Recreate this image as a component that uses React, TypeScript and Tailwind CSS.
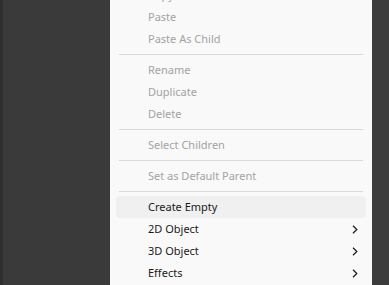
import React from "react";

type Item = { label: string; disabled?: boolean; sub?: boolean; active?: boolean } | "sep";

const items: Item[] = [
  { label: "Copy", disabled: true },
  { label: "Paste", disabled: true },
  { label: "Paste As Child", disabled: true },
  "sep",
  { label: "Rename", disabled: true },
  { label: "Duplicate", disabled: true },
  { label: "Delete", disabled: true },
  "sep",
  { label: "Select Children", disabled: true },
  "sep",
  { label: "Set as Default Parent", disabled: true },
  "sep",
  { label: "Create Empty", active: true },
  { label: "2D Object", sub: true },
  { label: "3D Object", sub: true },
  { label: "Effects", sub: true },
];

function Chevron() {
  return (
    <svg width="6" height="9" viewBox="0 0 6 9" fill="none">
      <path d="M1 0.8 L4.8 4.5 L1 8.2" stroke="#1a1a1a" strokeWidth="1.2" />
    </svg>
  );
}

export default function App() {
  return (
    <div
      className="w-[389px] h-[285px] overflow-hidden flex bg-[#3a3a3a]"
      style={{ fontFamily: '"Noto Sans", "Open Sans", sans-serif' }}
    >
      <div className="w-[3px] h-full bg-[#2f2f2f]" />
      <div className="w-[107px] h-full" />
      <div className="w-[262px] h-full bg-[#f9f9f9] overflow-hidden">
        <div className="mt-[-16px] px-[6px] flex flex-col">
          {items.map((it, i) =>
            it === "sep" ? (
              <div key={i} className="h-[9px] flex items-center px-[3px]">
                <div className="h-px w-full bg-[#d9d9d9]" />
              </div>
            ) : (
              <div
                key={i}
                className={
                  "h-[22px] shrink-0 flex items-center justify-between pl-[32px] pr-[8px] rounded-[4px] text-[11px] " +
                  (it.active ? "bg-[#f0f0f0] " : "") +
                  (it.disabled ? "text-[#a3a3a3]" : "text-[#1a1a1a]")
                }
              >
                <span>{it.label}</span>
                {it.sub && <Chevron />}
              </div>
            )
          )}
        </div>
      </div>
      <div className="flex-1 h-full bg-[#3c3c3c]" />
    </div>
  );
}
